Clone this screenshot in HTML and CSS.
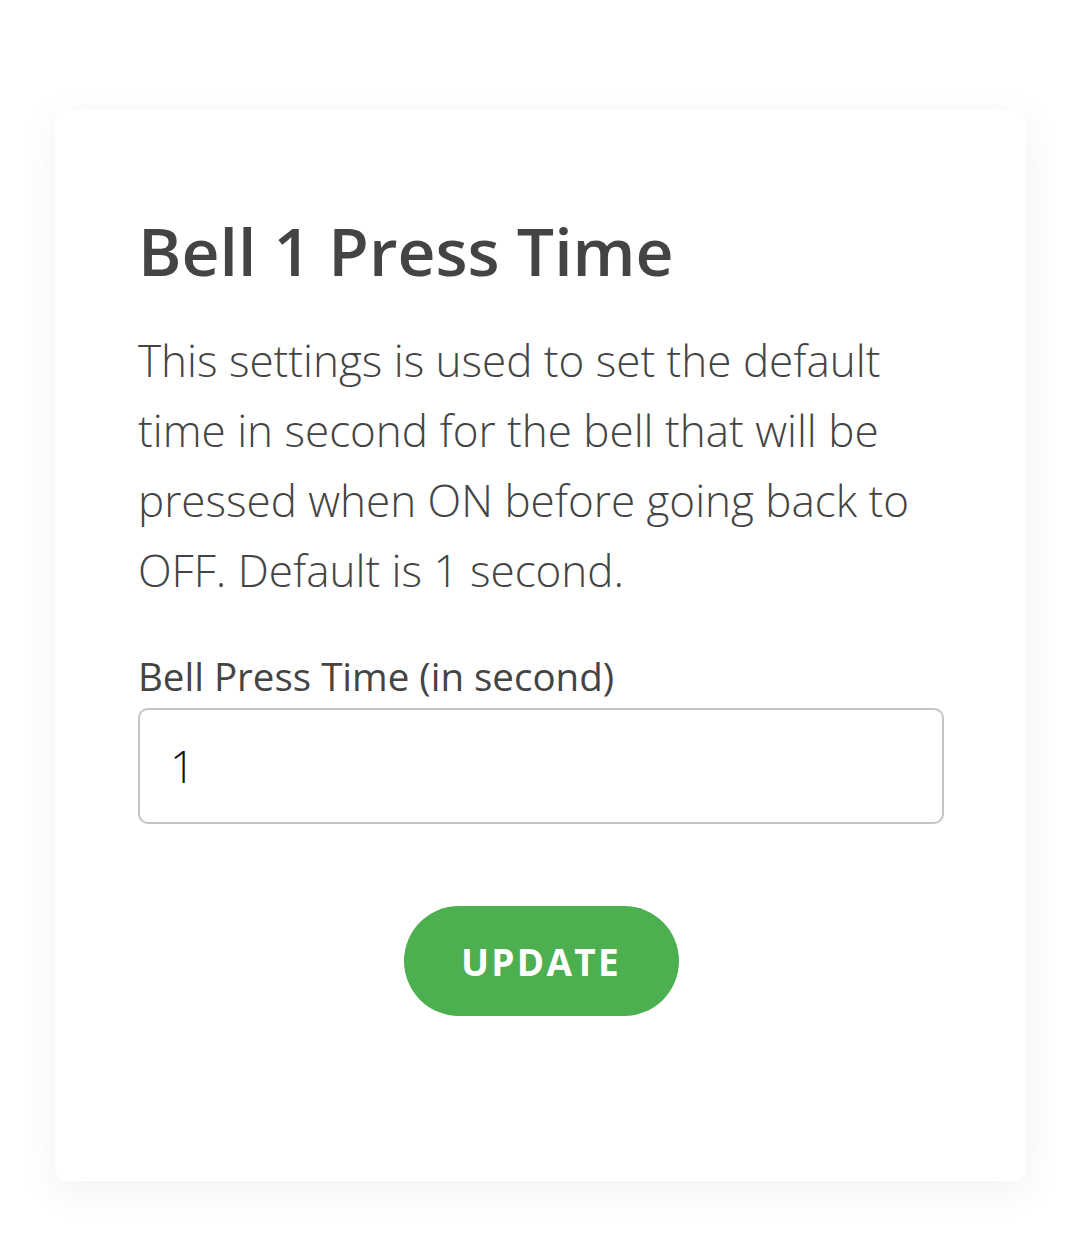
FILE: index.html
```html
<!DOCTYPE html>
<html>
<head>
<meta charset="utf-8">
<link rel="stylesheet" href="styles.css">
</head>
<body>
<div class="card">
  <h1 class="title">Bell 1 Press Time</h1>
  <p class="desc">This settings is used to set the default time in second for the bell that will be pressed when ON before going back to OFF. Default is 1 second.</p>
  <label class="label" for="t">Bell Press Time (in second)</label>
  <input class="field" id="t" type="text" value="1">
  <div class="actions">
    <button class="btn">UPDATE</button>
  </div>
</div>
</body>
</html>
```
FILE: styles.css
```css
html, body {
  margin: 0;
  padding: 0;
  background: #ffffff;
}
body {
  font-family: "Open Sans", sans-serif;
  color: #444444;
  padding: 110px 54px 78px 55px;
}
.card {
  background: #ffffff;
  border-radius: 12px;
  box-shadow: 0 10px 40px rgba(0, 0, 0, 0.06);
  height: 1071px;
  box-sizing: border-box;
  padding: 95px 82px 0 83px;
  display: flex;
  flex-direction: column;
}
.title {
  margin: 0;
  font-size: 66px;
  font-weight: 600;
  line-height: 90px;
  color: #444444;
}
.desc {
  margin: 30px 0 0 0;
  font-size: 44px;
  font-weight: 300;
  line-height: 70px;
  color: #444444;
}
.label {
  margin-top: 43px;
  font-size: 38.5px;
  font-weight: 400;
  line-height: 56px;
  color: #444444;
}
.field {
  margin-top: 4px;
  height: 116px;
  flex: 0 0 116px;
  box-sizing: border-box;
  border: 2px solid #c4c4c4;
  border-radius: 10px;
  padding: 0 30px;
  font-family: "Open Sans", sans-serif;
  font-size: 44px;
  font-weight: 300;
  color: #111111;
  outline: none;
}
.actions {
  display: flex;
  justify-content: center;
  margin-top: 82px;
}
.btn {
  width: 275px;
  height: 110px;
  border: none;
  border-radius: 55px;
  background: #4caf50;
  color: #ffffff;
  font-family: "Open Sans", sans-serif;
  font-weight: 700;
  font-size: 37px;
  letter-spacing: 2.3px;
  padding: 0;
}
```
